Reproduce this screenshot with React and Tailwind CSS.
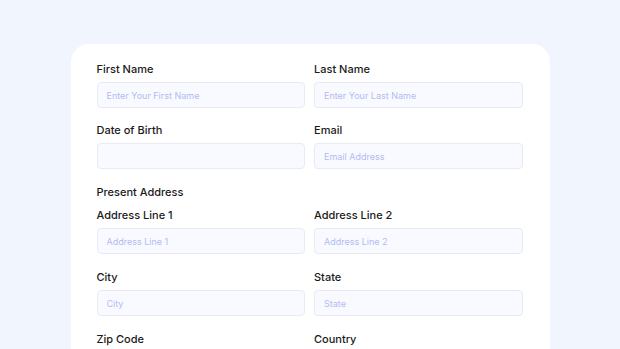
import React from "react";

const Field = ({ label, placeholder }) => (
    <div className="flex flex-col">
        <label className="text-[11px] leading-[14px] font-[550] text-[#1a1a1a] mb-[6px]">{label}</label>
        <input
            className="h-[26px] w-full rounded-[4px] border border-[#e6ebf5] bg-[#f8faff] px-[9px] text-[9px] text-[#333] placeholder:text-[#b3bcf0] outline-none"
            placeholder={placeholder}
        />
    </div>
);

const App = () => {
    return (
        <div
            className="w-full h-[349px] overflow-hidden bg-[#f1f5fd] flex justify-center pt-[44px]"
            style={{ fontFamily: "Inter, 'Noto Sans', sans-serif" }}
        >
            <div className="w-[479px] h-[400px] bg-white rounded-[18px] pl-[26px] pr-[27px] pt-[18px]">
                <div className="grid grid-cols-2 gap-x-[9px] gap-y-[15px]">
                    <Field label="First Name" placeholder="Enter Your First Name" />
                    <Field label="Last Name" placeholder="Enter Your Last Name" />
                    <Field label="Date of Birth" placeholder="" />
                    <Field label="Email" placeholder="Email Address" />
                </div>
                <p className="mt-[16px] mb-[9px] text-[11px] leading-[14px] font-[550] text-[#1a1a1a]">Present Address</p>
                <div className="grid grid-cols-2 gap-x-[9px] gap-y-[16px]">
                    <Field label="Address Line 1" placeholder="Address Line 1" />
                    <Field label="Address Line 2" placeholder="Address Line 2" />
                    <Field label="City" placeholder="City" />
                    <Field label="State" placeholder="State" />
                    <Field label="Zip Code" placeholder="Zip Code" />
                    <Field label="Country" placeholder="Country" />
                </div>
            </div>
        </div>
    );
};

export default App;
